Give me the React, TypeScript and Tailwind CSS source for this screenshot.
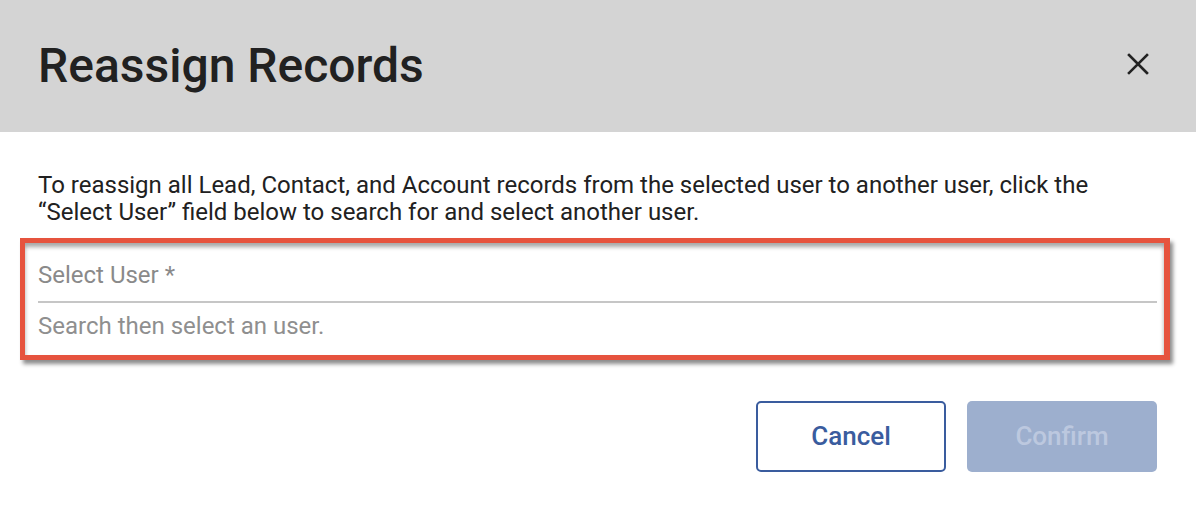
import React from "react";

export default function App() {
  return (
    <div className="w-[1196px] h-[510px] bg-white font-['Roboto',sans-serif] overflow-hidden">
      <header className="h-[132px] bg-[#d4d4d4] flex items-center justify-between pl-[38px] pr-[47px]">
        <h1 className="text-[48px] leading-[56px] font-medium text-[#212121]">Reassign Records</h1>
        <button className="w-[22px] h-[22px] mb-[4px] flex items-center justify-center" aria-label="Close">
          <svg width="22" height="22" viewBox="0 0 22 22" fill="none" stroke="#222" strokeWidth="2.6" strokeLinecap="square">
            <path d="M2 2 L20 20 M20 2 L2 20" />
          </svg>
        </button>
      </header>
      <div className="px-[38px] pt-[40px]">
        <p className="text-[24px] leading-[27px] text-[#212121]">
          To reassign all Lead, Contact, and Account records from the selected user to another user, click the
          <br />
          “Select User” field below to search for and select another user.
        </p>
      </div>
      <div className="ml-[20px] mr-[26px] mt-[12px] border-[5px] border-r-[6px] border-[#e6533e] pl-[13px] pr-[7px] pt-[18px] pb-[15px] shadow-[3px_4px_4px_rgba(0,0,0,0.45),inset_0_4px_4px_rgba(0,0,0,0.35)]">
        <div className="text-[24px] leading-[28px] text-[#8a8a8a]">Select User *</div>
        <div className="mt-[12px] h-[2px] bg-[#c6c6c6]" />
        <div className="mt-[9px] text-[24px] leading-[28px] text-[#8f8f8f]">Search then select an user.</div>
      </div>
      <div className="flex justify-end gap-[21px] pr-[39px] mt-[41px]">
        <button className="w-[190px] h-[71px] rounded-[5px] border-2 border-[#3a5c9e] text-[#3a5c9e] text-[26px] font-medium bg-white">
          Cancel
        </button>
        <button className="w-[190px] h-[71px] rounded-[5px] bg-[#9dafce] text-[#bcc8df] text-[26px] font-medium">
          Confirm
        </button>
      </div>
    </div>
  );
}
